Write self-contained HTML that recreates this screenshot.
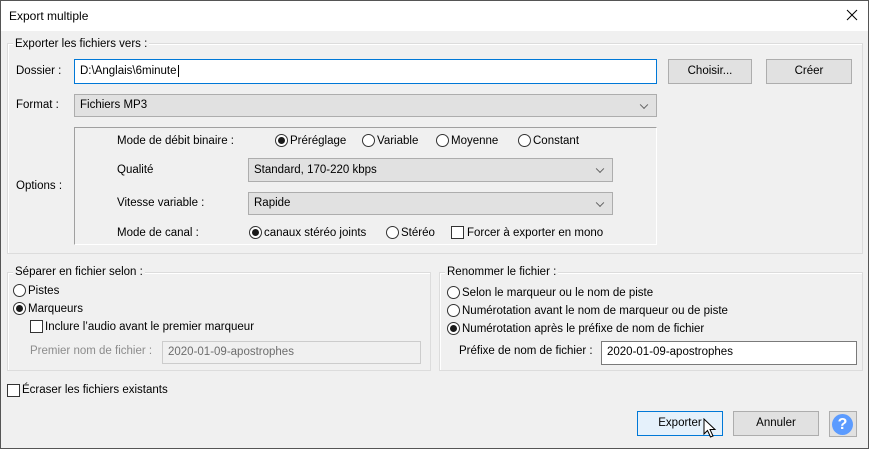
<!DOCTYPE html>
<html><head><meta charset="utf-8"><style>
*{box-sizing:border-box;margin:0;padding:0}
body{width:869px;height:449px;overflow:hidden;background:#f0f0f0;font-family:"Liberation Sans",sans-serif;font-size:11.5px;color:#000;position:relative}
.a{position:absolute;line-height:14px;white-space:nowrap}
.win{position:absolute;left:0;top:0;width:869px;height:449px;border:1px solid #555}
.title{position:absolute;left:1px;top:1px;width:867px;height:30px;background:#fff}
.grp{position:absolute;border:1px solid #dcdcdc;box-shadow:inset 1px 1px 0 #fff}
.gl{position:absolute;background:#f0f0f0;padding:0 2px;line-height:14px}
.in{position:absolute;background:#fff;border:1px solid #7a7a7a;padding-left:5px;line-height:20px}
.cb{position:absolute;background:#e1e1e1;border:1px solid #adadad;padding-left:5px}
.cb:after{content:"";position:absolute;right:9px;top:50%;width:5px;height:5px;border-right:1px solid #606060;border-bottom:1px solid #606060;transform:translateY(-70%) rotate(45deg)}
.btn{position:absolute;background:#e1e1e1;border:1px solid #adadad;text-align:center}
.r{position:absolute;width:13px;height:13px;border:1px solid #333;border-radius:50%;background:#fff}
.r.on:after{content:"";position:absolute;left:2px;top:2px;width:7px;height:7px;border-radius:50%;background:#1a1a1a}
.c{position:absolute;width:13px;height:13px;border:1px solid #333;background:#fff}
</style></head><body>
<div class="win"></div>
<div class="title"></div>
<div class="a" style="left:9px;top:9px;font-size:12px">Export multiple</div>
<svg class="a" style="left:846px;top:9px" width="12" height="12"><path d="M1 1L11 11M11 1L1 11" stroke="#000" stroke-width="1"/></svg>

<div class="grp" style="left:7px;top:43px;width:856px;height:211px"></div>
<div class="gl" style="left:13px;top:37px">Exporter les fichiers vers :</div>
<div class="a" style="left:16px;top:64px">Dossier :</div>
<div class="in" style="left:74px;top:59px;width:583px;height:25px;border-color:#0078d7;line-height:22px">D:\Anglais\6minute<span style="border-left:1px solid #000;margin-left:1px"></span></div>
<div class="btn" style="left:668px;top:59px;width:84px;height:25px;line-height:23px">Choisir...</div>
<div class="btn" style="left:766px;top:59px;width:86px;height:25px;line-height:23px">Créer</div>
<div class="a" style="left:16px;top:98px">Format :</div>
<div class="cb" style="left:74px;top:94px;width:583px;height:23px;line-height:21px">Fichiers MP3</div>

<div style="position:absolute;left:74px;top:127px;width:583px;height:118px;border:1px solid #a0a0a0;border-right-color:#fff;border-bottom-color:#fff"></div>
<div class="a" style="left:16px;top:179px">Options :</div>
<div class="a" style="left:117px;top:134px">Mode de débit binaire :</div>
<div class="r on" style="left:275px;top:134px"></div><div class="a" style="left:290px;top:134px">Préréglage</div>
<div class="r" style="left:362px;top:134px"></div><div class="a" style="left:377px;top:134px">Variable</div>
<div class="r" style="left:436px;top:134px"></div><div class="a" style="left:451px;top:134px">Moyenne</div>
<div class="r" style="left:518px;top:134px"></div><div class="a" style="left:533px;top:134px">Constant</div>
<div class="a" style="left:117px;top:163px">Qualité</div>
<div class="cb" style="left:248px;top:158px;width:365px;height:24px;line-height:22px">Standard, 170-220 kbps</div>
<div class="a" style="left:117px;top:196px">Vitesse variable :</div>
<div class="cb" style="left:248px;top:192px;width:365px;height:23px;line-height:21px">Rapide</div>
<div class="a" style="left:117px;top:226px">Mode de canal :</div>
<div class="r on" style="left:249px;top:226px"></div><div class="a" style="left:264px;top:226px">canaux stéréo joints</div>
<div class="r" style="left:386px;top:226px"></div><div class="a" style="left:401px;top:226px">Stéréo</div>
<div class="c" style="left:451px;top:226px"></div><div class="a" style="left:467px;top:226px">Forcer à exporter en mono</div>

<div class="grp" style="left:7px;top:272px;width:424px;height:99px"></div>
<div class="gl" style="left:13px;top:265px">Séparer en fichier selon :</div>
<div class="r" style="left:13px;top:284px"></div><div class="a" style="left:28px;top:284px">Pistes</div>
<div class="r on" style="left:13px;top:302px"></div><div class="a" style="left:28px;top:302px">Marqueurs</div>
<div class="c" style="left:30px;top:320px"></div><div class="a" style="left:45px;top:320px">Inclure l’audio avant le premier marqueur</div>
<div class="a" style="left:30px;top:344px;color:#8c8c8c">Premier nom de fichier :</div>
<div class="in" style="left:162px;top:341px;width:259px;height:23px;background:#f0f0f0;border-color:#cccccc;color:#6d6d6d">2020-01-09-apostrophes</div>

<div class="grp" style="left:439px;top:272px;width:424px;height:99px"></div>
<div class="gl" style="left:445px;top:265px">Renommer le fichier :</div>
<div class="r" style="left:447px;top:286px"></div><div class="a" style="left:462px;top:286px">Selon le marqueur ou le nom de piste</div>
<div class="r" style="left:447px;top:304px"></div><div class="a" style="left:462px;top:304px">Numérotation avant le nom de marqueur ou de piste</div>
<div class="r on" style="left:447px;top:322px"></div><div class="a" style="left:462px;top:322px">Numérotation après le préfixe de nom de fichier</div>
<div class="a" style="left:459px;top:344px">Préfixe de nom de fichier :</div>
<div class="in" style="left:601px;top:341px;width:256px;height:24px">2020-01-09-apostrophes</div>

<div class="c" style="left:7px;top:384px"></div><div class="a" style="left:22px;top:383px">Écraser les fichiers existants</div>

<div class="btn" style="left:637px;top:411px;width:86px;height:25px;line-height:23px;background:#e5f1fb;border-color:#0078d7">Exporter</div>
<svg class="a" style="left:703px;top:418px" width="14" height="22"><path d="M1 1L1 16L4.5 12.5L7.5 19L10 18L7 11.5L12 11.5Z" fill="#fff" stroke="#000" stroke-width="1"/></svg>
<div class="btn" style="left:733px;top:411px;width:86px;height:25px;line-height:23px">Annuler</div>
<div class="btn" style="left:829px;top:411px;width:28px;height:26px"></div>
<div class="a" style="left:832px;top:414px;width:21px;height:21px;border-radius:50%;background:#5b9bff;color:#fff;font-weight:bold;font-size:16px;line-height:21px;text-align:center">?</div>
</body></html>
